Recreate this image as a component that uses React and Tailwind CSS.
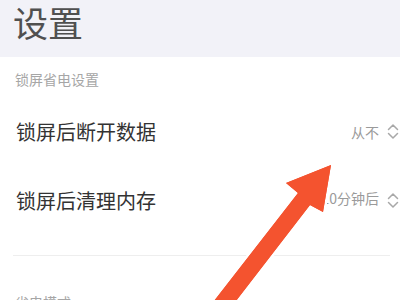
import React from "react";

const cjk = { fontFamily: '"Noto Sans CJK SC", "Noto Sans", sans-serif' };

function UpDown() {
  return (
    <svg width="12" height="17" viewBox="0 0 12 17" fill="none" stroke="#a8a8a8" strokeWidth="1.5" strokeLinecap="round" strokeLinejoin="round">
      <path d="M1.5 6.5 L6 2 L10.5 6.5" />
      <path d="M1.5 10.5 L6 15 L10.5 10.5" />
    </svg>
  );
}

function Row({ label, value, valueClass = "" }) {
  return (
    <div className="flex h-[69px] items-center justify-between pl-[16px] pr-[1px]">
      <span className="text-[20px] leading-none text-[#333333]">{label}</span>
      <div className="flex items-center gap-[8px]">
        <span className={"text-[14px] leading-none text-[#9a9a9a] " + valueClass}>{value}</span>
        <UpDown />
      </div>
    </div>
  );
}

export default function App() {
  return (
    <div className="relative h-[300px] w-[400px] overflow-hidden bg-white" style={cjk}>
      <div className="h-[57px] bg-[#f2f2f8] pl-[13px] pt-[4px]">
        <span className="text-[35px] leading-none text-[#505050]">设置</span>
      </div>
      <div className="mt-[15px] pl-[15px] text-[14px] leading-none text-[#a6a6a6]">锁屏省电设置</div>
      <div className="mt-[11px]">
        <Row label="锁屏后断开数据" value="从不" />
        <Row label="锁屏后清理内存" value="10分钟后" valueClass="-mt-[6px]" />
      </div>
      <div className="ml-[13px] mr-[10px] mt-[20px] h-px bg-[#eeeeee]" />
      <div className="mt-[39px] pl-[15px] text-[14px] leading-none text-[#a6a6a6]">省电模式</div>
      <svg className="absolute inset-0" width="400" height="300" viewBox="0 0 400 300">
        <polygon
          points="331,165 323,212 310,205 229,310 207,310 298,193 286,183"
          fill="#f4532f"
          stroke="#ffffff"
          strokeWidth="5"
          strokeLinejoin="round"
          paintOrder="stroke"
        />
        <polygon
          points="331,165 323,212 310,205 229,310 207,310 298,193 286,183"
          fill="#f4532f"
        />
      </svg>
    </div>
  );
}
